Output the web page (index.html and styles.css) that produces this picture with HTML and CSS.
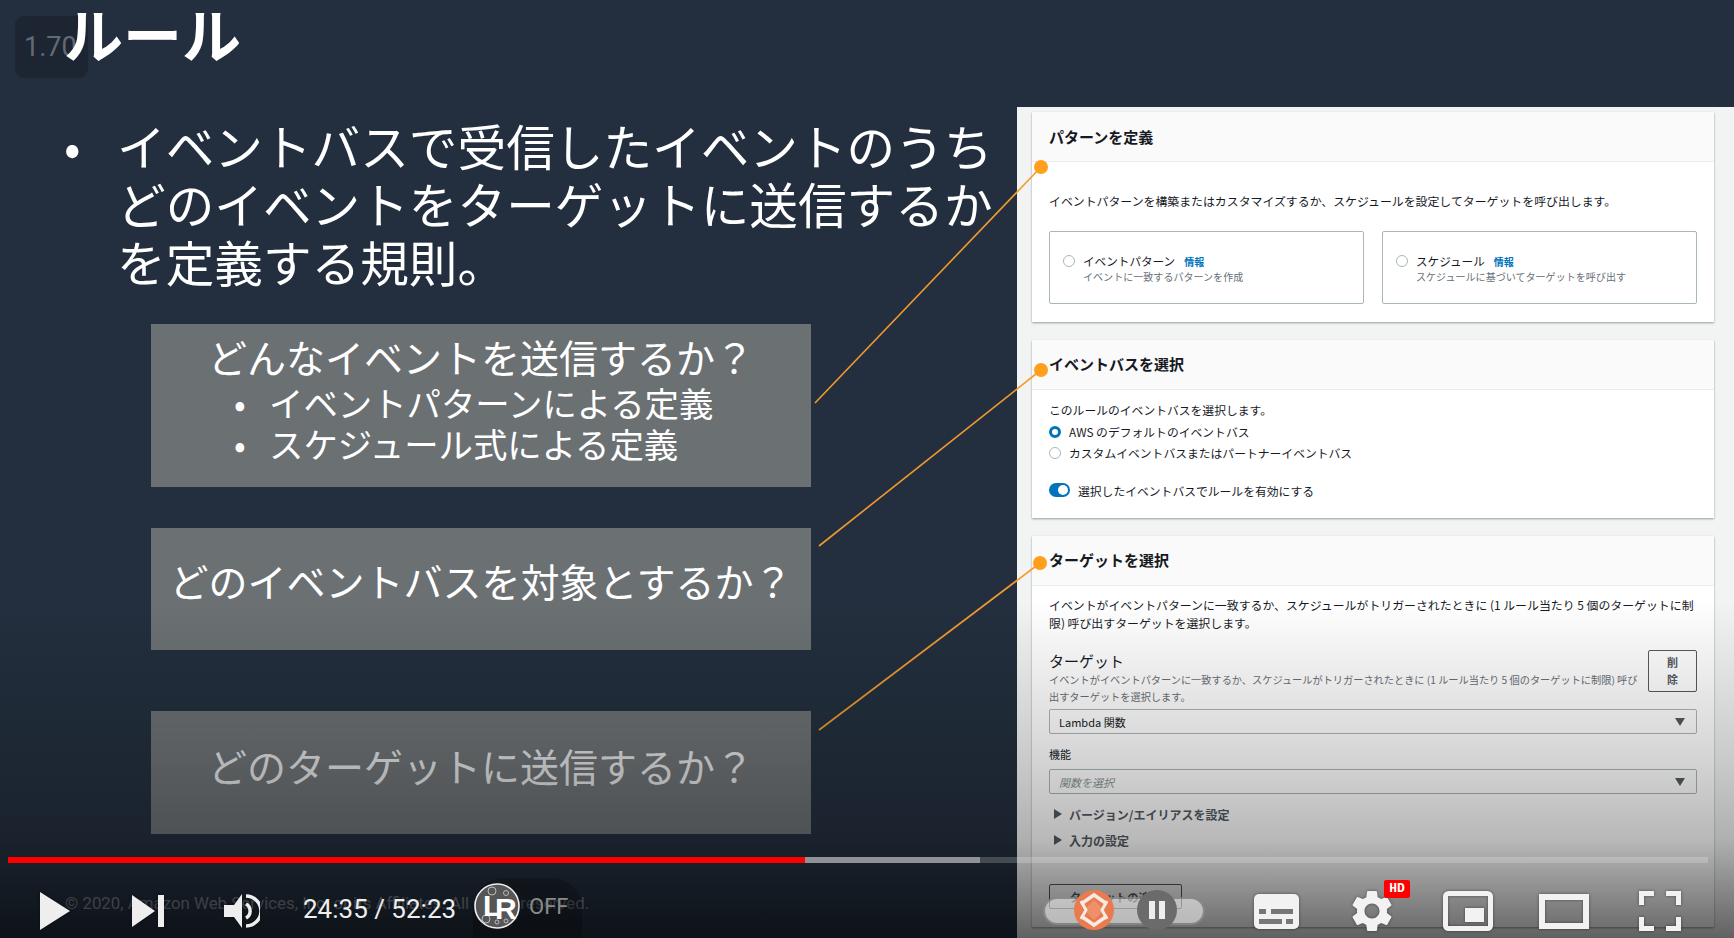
FILE: index.html
```html
<!DOCTYPE html>
<html lang="ja">
<head>
    <meta charset="UTF-8">
    <meta name="viewport" content="width=device-width, initial-scale=1.0">
    <title>ルール</title>
    <link rel="stylesheet" href="styles.css">
</head>
<body>
    <div class="stage">
        <div class="speed-badge">1.70</div>

        <div class="slide">
            <h1>ルール</h1>
            <div class="lead">
                <span class="lead-dot">•</span>
                <p>イベントバスで受信したイベントのうち<br>どのイベントをターゲットに送信するか<br>を定義する規則。</p>
            </div>
            <div class="box box-first">
                <div class="box-title">どんなイベントを送信するか？</div>
                <div class="box-item"><span class="box-dot">•</span>イベントパターンによる定義</div>
                <div class="box-item"><span class="box-dot">•</span>スケジュール式による定義</div>
            </div>
            <div class="box box-second">どのイベントバスを対象とするか？</div>
            <div class="box box-third">どのターゲットに送信するか？</div>
            <div class="copyright">© 2020, Amazon Web Services, Inc. or its Affiliates. All rights reserved.</div>
        </div>

        <div class="console">
            <section class="card card-pattern">
                <div class="card-head">パターンを定義</div>
                <div class="card-body">
                    <p class="desc">イベントパターンを構築またはカスタマイズするか、スケジュールを設定してターゲットを呼び出します。</p>
                    <div class="tiles">
                        <div class="tile">
                            <span class="radio"></span>
                            <div>
                                <div class="tile-name">イベントパターン<a class="info">情報</a></div>
                                <div class="tile-sub">イベントに一致するパターンを作成</div>
                            </div>
                        </div>
                        <div class="tile">
                            <span class="radio"></span>
                            <div>
                                <div class="tile-name">スケジュール<a class="info">情報</a></div>
                                <div class="tile-sub">スケジュールに基づいてターゲットを呼び出す</div>
                            </div>
                        </div>
                    </div>
                </div>
            </section>

            <section class="card card-bus">
                <div class="card-head">イベントバスを選択</div>
                <div class="card-body body-bus">
                    <p class="desc">このルールのイベントバスを選択します。</p>
                    <div class="option option-first"><span class="radio radio-on"></span>AWS のデフォルトのイベントバス</div>
                    <div class="option"><span class="radio"></span>カスタムイベントバスまたはパートナーイベントバス</div>
                    <div class="switch-row"><span class="switch"></span>選択したイベントバスでルールを有効にする</div>
                </div>
            </section>

            <section class="card card-target">
                <div class="card-head">ターゲットを選択</div>
                <div class="card-body body-target">
                    <p class="desc desc-tight">イベントがイベントパターンに一致するか、スケジュールがトリガーされたときに (1 ルール当たり 5 個のターゲットに制<br>限) 呼び出すターゲットを選択します。</p>
                    <div class="target-row">
                        <div class="target-text">
                            <div class="target-name">ターゲット</div>
                            <div class="target-sub">イベントがイベントパターンに一致するか、スケジュールがトリガーされたときに (1 ルール当たり 5 個のターゲットに制限) 呼び<br>出すターゲットを選択します。</div>
                        </div>
                        <button class="btn-remove">削<br>除</button>
                    </div>
                    <div class="select select-first">Lambda 関数<span class="caret"></span></div>
                    <div class="field-label">機能</div>
                    <div class="select select-empty"><em>関数を選択</em><span class="caret"></span></div>
                    <div class="expander expander-first"><span class="arrow"></span>バージョン/エイリアスを設定</div>
                    <div class="expander"><span class="arrow"></span>入力の設定</div>
                    <button class="btn-add">ターゲットの追加</button>
                </div>
            </section>
        </div>

        <svg class="leaders" width="1734" height="938" viewBox="0 0 1734 938">
            <g stroke="#f29a2e" stroke-width="1.6">
                <line x1="815" y1="403" x2="1041" y2="167"/>
                <line x1="819" y1="546" x2="1041" y2="370"/>
                <line x1="819" y1="730" x2="1040" y2="563"/>
            </g>
            <g fill="#ff9f1c">
                <circle cx="1041" cy="167" r="7"/>
                <circle cx="1041" cy="370" r="7"/>
                <circle cx="1040" cy="563" r="7"/>
            </g>
        </svg>

        <div class="shade"></div>

        <div class="player">
            <div class="progress">
                <div class="progress-played"></div>
                <div class="progress-buffer"></div>
            </div>
            <div class="controls">
                <svg class="icon icon-play" width="30" height="38" viewBox="0 0 30 38"><polygon points="0,0 30,19 0,38" fill="#eee"/></svg>
                <svg class="icon icon-next" width="32" height="32" viewBox="0 0 32 32"><polygon points="0,0 23,16 0,32" fill="#eee"/><rect x="26" width="6" height="32" fill="#eee"/></svg>
                <svg class="icon icon-volume" width="36" height="34" viewBox="0 0 36 34">
                    <polygon points="0,11 10,11 18,0 18,34 10,23 0,23" fill="#eee"/>
                    <path d="M22 10a8 8 0 0 1 0 14" fill="none" stroke="#eee" stroke-width="3.5"/>
                    <path d="M22 2a15 15 0 0 1 0 30" fill="none" stroke="#eee" stroke-width="3.5"/>
                </svg>
                <div class="time">24:35 / 52:23</div>
                <div class="lr-pill">
                    <svg width="46" height="46" viewBox="0 0 46 46">
                        <circle cx="23" cy="23" r="22" fill="#565656" stroke="#eee" stroke-width="1.6"/>
                        <g fill="none" stroke="#bbb" stroke-width="1">
                            <circle cx="18" cy="8" r="4"/>
                            <circle cx="32" cy="10" r="2.5"/>
                            <circle cx="12" cy="36" r="4"/>
                            <circle cx="23" cy="39" r="2"/>
                            <circle cx="32" cy="38" r="2"/>
                        </g>
                        <text class="lr-mark" x="9" y="33">L</text>
                        <text class="lr-mark" x="21" y="36">R</text>
                    </svg>
                    <span class="lr-off">OFF</span>
                </div>

                <div class="autoplay">
                    <svg class="autoplay-logo" width="42" height="40" viewBox="0 0 42 40">
                        <circle cx="21" cy="20" r="20" fill="#e97b4f"/>
                        <polygon points="21,10 31,20 21,30 11,20" fill="#ef9068"/>
                        <path d="M8 14 L21 5 L34 14 M8 26 L21 35 L34 26" fill="none" stroke="#f4ebe6" stroke-width="3.5"/>
                        <path d="M8 11 L13 20 L8 29 M34 11 L29 20 L34 29" fill="none" stroke="#f4ebe6" stroke-width="3"/>
                    </svg>
                    <div class="autoplay-pause"><span></span><span></span></div>
                </div>

                <svg class="icon icon-subs" width="45" height="35" viewBox="0 0 45 35">
                    <rect width="45" height="35" rx="5" fill="#f2f2f2"/>
                    <g fill="#777">
                        <rect x="5" y="15" width="7" height="5"/>
                        <rect x="17" y="15" width="22" height="5"/>
                        <rect x="5" y="25" width="23" height="5"/>
                        <rect x="32" y="25" width="7" height="5"/>
                    </g>
                </svg>
                <div class="gear">
                    <svg class="icon" width="50" height="50" viewBox="0 0 24 24"><path fill="#f2f2f2" d="M19.14,12.94c0.04-0.3,0.06-0.61,0.06-0.94c0-0.32-0.02-0.64-0.07-0.94l2.03-1.58c0.18-0.14,0.23-0.41,0.12-0.61 l-1.92-3.32c-0.12-0.22-0.37-0.29-0.59-0.22l-2.39,0.96c-0.5-0.38-1.03-0.7-1.62-0.94L14.4,2.81c-0.04-0.24-0.24-0.41-0.48-0.41 h-3.84c-0.24,0-0.43,0.17-0.47,0.41L9.25,5.35C8.66,5.59,8.12,5.92,7.63,6.29L5.24,5.33c-0.22-0.08-0.47,0-0.59,0.22L2.74,8.87 C2.62,9.08,2.66,9.34,2.86,9.48l2.03,1.58C4.84,11.36,4.8,11.69,4.8,12s0.02,0.64,0.07,0.94l-2.03,1.58 c-0.18,0.14-0.23,0.41-0.12,0.61l1.92,3.32c0.12,0.22,0.37,0.29,0.59,0.22l2.39-0.96c0.5,0.38,1.03,0.7,1.62,0.94l0.36,2.54 c0.05,0.24,0.24,0.41,0.48,0.41h3.84c0.24,0,0.44-0.17,0.47-0.41l0.36-2.54c0.59-0.24,1.13-0.56,1.62-0.94l2.39,0.96 c0.22,0.08,0.47,0,0.59-0.22l1.92-3.32c0.12-0.22,0.07-0.47-0.12-0.61L19.14,12.94z M12,15.6c-1.98,0-3.6-1.62-3.6-3.6 s1.62-3.6,3.6-3.6s3.6,1.62,3.6,3.6S13.98,15.6,12,15.6z"/></svg>
                    <span class="hd">HD</span>
                </div>
                <svg class="icon icon-mini" width="50" height="40" viewBox="0 0 50 40">
                    <rect x="2.5" y="2.5" width="45" height="35" rx="3" fill="none" stroke="#f2f2f2" stroke-width="5"/>
                    <rect x="22" y="17" width="19" height="14" fill="#f2f2f2"/>
                </svg>
                <svg class="icon icon-theater" width="50" height="35" viewBox="0 0 50 35">
                    <rect x="3" y="3" width="44" height="29" fill="none" stroke="#f2f2f2" stroke-width="6"/>
                </svg>
                <svg class="icon icon-full" width="42" height="40" viewBox="0 0 42 40">
                    <path d="M2.5 14V2.5H15M27 2.5H39.5V14M39.5 26V37.5H27M15 37.5H2.5V26" fill="none" stroke="#f2f2f2" stroke-width="5"/>
                </svg>
            </div>
        </div>
    </div>
</body>
</html>
```

FILE: styles.css
```css
body {
    margin: 0;
    background-color: #232f3e;
    font-family: "Noto Sans CJK JP", "Noto Sans", sans-serif;
}

p {
    margin: 0;
}

.stage {
    position: relative;
    display: flex;
    width: 1734px;
    height: 938px;
    overflow: hidden;
    background-color: #232f3e;
}

.speed-badge {
    position: absolute;
    left: 15px;
    top: 16px;
    width: 73px;
    height: 62px;
    line-height: 62px;
    padding-left: 9px;
    box-sizing: border-box;
    border-radius: 9px;
    background-color: #1c2531;
    color: #636a74;
    font-family: Roboto, sans-serif;
    font-size: 27px;
}

/* left half of the slide */
.slide {
    width: 1017px;
    flex-shrink: 0;
}

h1 {
    position: relative;
    margin: 0;
    padding-left: 64px;
    height: 74px;
    line-height: 66px;
    color: #fff;
    font-size: 59px;
    font-weight: 700;
}

.lead {
    display: flex;
    margin-top: 42px;
    padding-left: 64px;
    color: #fff;
    font-size: 48.65px;
    line-height: 58px;
}

.lead-dot {
    width: 53px;
    flex-shrink: 0;
}

.box {
    margin-left: 151px;
    width: 660px;
    box-sizing: border-box;
    background-color: #6b7073;
    color: #fff;
    font-size: 39px;
    text-align: center;
}

.box-first {
    margin-top: 34px;
    height: 163px;
    padding-top: 9px;
    line-height: 46px;
}

.box-item {
    display: flex;
    padding-left: 118px;
    height: 41px;
    line-height: 41px;
    font-size: 34.4px;
    text-align: left;
}

.box-title + .box-item {
    margin-top: 3px;
}

.box-dot {
    width: 0;
    margin-left: -35px;
    margin-right: 35px;
}

.box-second,
.box-third {
    display: flex;
    align-items: center;
    justify-content: center;
}

.box-second {
    margin-top: 41px;
    height: 122px;
    padding-bottom: 18px;
}

.box-third {
    margin-top: 61px;
    height: 123px;
    padding-bottom: 16px;
    color: #dcdedf;
}

.copyright {
    margin-top: 57px;
    margin-left: 65px;
    white-space: nowrap;
    color: #767e88;
    font-family: Roboto, sans-serif;
    font-size: 16.85px;
    line-height: 24px;
}

/* console screenshot on the right */
.console {
    width: 717px;
    height: 831px;
    margin-top: 107px;
    padding: 5px 20px 0 15px;
    box-sizing: border-box;
    background-color: #f2f3f3;
    color: #16191f;
    font-size: 11.8px;
}

.card {
    background: #fff;
    box-shadow: 0 1px 2px rgba(0, 28, 36, 0.4);
    margin-bottom: 18px;
}

.card-pattern {
    height: 210px;
}

.card-bus {
    height: 178px;
}

.card-target {
    height: 391px;
}

.card-head {
    height: 50px;
    line-height: 50px;
    padding-left: 17px;
    box-sizing: border-box;
    background: #fafafa;
    border-bottom: 1px solid #eaeded;
    font-size: 15px;
    font-weight: 700;
}

.card-bus .card-head,
.card-target .card-head {
    line-height: 47px;
}

.card-body {
    padding: 30px 17px 0;
}

.desc {
    font-size: 11.9px;
    line-height: 18px;
    white-space: nowrap;
}

.tiles {
    display: flex;
    gap: 18px;
    margin-top: 21px;
}

.tile {
    display: flex;
    align-items: flex-start;
    gap: 8px;
    width: 316px;
    height: 73px;
    padding: 21px 0 0 13px;
    box-sizing: border-box;
    border: 1px solid #aab7b8;
    border-radius: 2px;
}

.radio {
    display: inline-block;
    width: 12px;
    height: 12px;
    flex-shrink: 0;
    box-sizing: border-box;
    border: 1px solid #aab7b8;
    border-radius: 50%;
    background: #fff;
}

.tile .radio {
    margin-top: 2px;
}

.radio-on {
    border: 3.5px solid #0073bb;
}

.tile-name {
    font-size: 11.6px;
    line-height: 16px;
}

.tile-sub {
    color: #687078;
    font-size: 10.05px;
    line-height: 14px;
}

.info {
    margin-left: 9px;
    color: #0073bb;
    font-size: 10px;
    font-weight: 700;
}

.body-bus {
    padding-top: 11px;
}

.body-bus .desc {
    font-size: 11.8px;
}

.option {
    display: flex;
    align-items: center;
    gap: 8px;
    height: 21px;
    white-space: nowrap;
}

.option-first {
    margin-top: 2px;
}

.switch-row {
    display: flex;
    align-items: center;
    gap: 8px;
    height: 20px;
    margin-top: 17px;
}

.switch {
    position: relative;
    width: 21px;
    height: 14px;
    border-radius: 7px;
    background: #0073bb;
}

.switch::after {
    content: "";
    position: absolute;
    right: 2px;
    top: 2px;
    width: 10px;
    height: 10px;
    border-radius: 50%;
    background: #fff;
}

.body-target {
    padding-top: 10px;
}

.target-row {
    display: flex;
    justify-content: space-between;
    margin-top: 18px;
}

.target-text {
    min-width: 0;
}

.target-name {
    font-size: 15px;
    line-height: 21px;
}

.target-sub {
    color: #687078;
    font-size: 10.2px;
    line-height: 17px;
    white-space: nowrap;
}

.btn-remove {
    flex-shrink: 0;
    width: 49px;
    height: 42px;
    padding: 0;
    box-sizing: border-box;
    border: 1px solid #545b64;
    border-radius: 2px;
    background: #fff;
    color: #545b64;
    font-family: inherit;
    font-size: 11px;
    font-weight: 700;
    line-height: 17px;
}

.select {
    display: flex;
    align-items: center;
    justify-content: space-between;
    height: 25px;
    padding: 0 11px 0 9px;
    box-sizing: border-box;
    border: 1px solid #aab7b8;
    border-radius: 2px;
    background: #fff;
    font-size: 11px;
}

.select-first {
    margin-top: 4px;
}

.select-empty {
    margin-top: 7px;
    color: #879596;
}

.caret {
    width: 0;
    height: 0;
    border-left: 5px solid transparent;
    border-right: 5px solid transparent;
    border-top: 8px solid #545b64;
}

.field-label {
    margin-top: 12px;
    font-size: 11px;
    line-height: 16px;
}

.expander {
    display: flex;
    align-items: center;
    gap: 7px;
    height: 26px;
    padding-left: 5px;
    font-size: 12px;
    font-weight: 700;
    color: #545b64;
}

.expander-first {
    margin-top: 7px;
}

.arrow {
    width: 0;
    height: 0;
    border-top: 5px solid transparent;
    border-bottom: 5px solid transparent;
    border-left: 8px solid #545b64;
}

.btn-add {
    display: block;
    width: 133px;
    height: 25px;
    margin-top: 31px;
    padding: 0;
    border: 1px solid #545b64;
    border-radius: 2px;
    background: #fff;
    color: #545b64;
    font-family: inherit;
    font-size: 11.5px;
    font-weight: 700;
}

/* orange leader lines */
.leaders {
    position: absolute;
    left: 0;
    top: 0;
}

/* player chrome */
.shade {
    position: absolute;
    left: 0;
    right: 0;
    top: 600px;
    bottom: 0;
    background: linear-gradient(to bottom, rgba(0, 0, 0, 0) 0, rgba(0, 0, 0, 0.17) 160px, rgba(0, 0, 0, 0.28) 240px, rgba(0, 0, 0, 0.6) 100%);
}

.player {
    position: absolute;
    left: 0;
    right: 0;
    bottom: 0;
}

.progress {
    display: flex;
    width: 1700px;
    height: 6px;
    margin: 0 0 15px 8px;
    background: rgba(255, 255, 255, 0.2);
}

.progress-played {
    width: 797px;
    background: #f00;
}

.progress-buffer {
    width: 175px;
    background: rgba(255, 255, 255, 0.4);
}

.controls {
    display: flex;
    align-items: center;
    height: 60px;
    padding-top: 6px;
    box-sizing: border-box;
}

.icon {
    flex-shrink: 0;
    filter: drop-shadow(0 0 1.5px rgba(0, 0, 0, 0.45));
}

.icon-play {
    margin-left: 40px;
}

.icon-next {
    margin-left: 62px;
}

.icon-volume {
    margin-left: 60px;
}

.time {
    margin: -4px 0 0 43px;
    width: 151px;
    color: #eee;
    font-family: Roboto, sans-serif;
    font-size: 26px;
    white-space: nowrap;
}

.lr-pill {
    display: flex;
    align-items: center;
    gap: 9px;
    align-self: flex-start;
    width: 109px;
    height: 60px;
    margin: -6px 0 0 19px;
    padding: 0 0 4px 1px;
    box-sizing: border-box;
    border-radius: 30px 30px 0 0;
    background: rgba(0, 0, 0, 0.2);
}

.lr-mark {
    fill: #fff;
    font-family: "Liberation Sans", sans-serif;
    font-size: 30px;
    font-weight: 700;
}

.lr-off {
    color: #8a8a8a;
    font-family: Roboto, sans-serif;
    font-size: 22px;
}

.autoplay {
    position: relative;
    width: 162px;
    height: 28px;
    margin-left: 461px;
    box-sizing: border-box;
    border: 2px solid rgba(80, 80, 80, 0.5);
    border-radius: 14px;
    background: rgba(255, 255, 255, 0.5);
}

.autoplay-logo {
    position: absolute;
    left: 28px;
    top: -9px;
}

.autoplay-pause {
    position: absolute;
    left: 92px;
    top: -9px;
    display: flex;
    align-items: center;
    justify-content: center;
    gap: 4px;
    width: 40px;
    height: 40px;
    border-radius: 50%;
    background: #6b6b6b;
}

.autoplay-pause span {
    width: 6px;
    height: 18px;
    background: #eee;
}

.icon-subs {
    margin-left: 49px;
}

.gear {
    position: relative;
    width: 50px;
    height: 50px;
    margin-left: 48px;
}

.hd {
    position: absolute;
    left: 37px;
    top: -6px;
    width: 26px;
    height: 18px;
    line-height: 18px;
    border-radius: 2px;
    background: #f00;
    color: #fff;
    font-family: "Liberation Mono", monospace;
    font-size: 13px;
    font-weight: 700;
    text-align: center;
}

.icon-mini {
    margin-left: 46px;
}

.icon-theater {
    margin-left: 46px;
}

.icon-full {
    margin-left: 50px;
}
```
